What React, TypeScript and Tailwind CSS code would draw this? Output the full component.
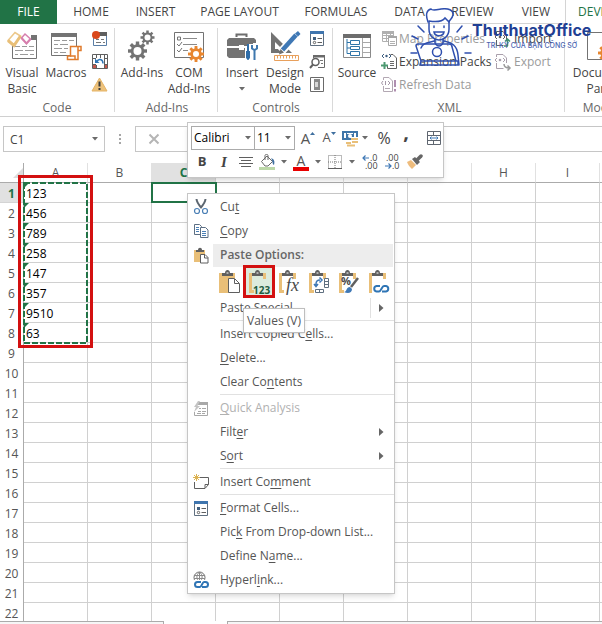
import type { ReactNode } from "react";

const tabs = ["HOME", "INSERT", "PAGE LAYOUT", "FORMULAS", "DATA", "REVIEW", "VIEW"];
const tabWidths = ["w-[64px]", "w-[65px]", "w-[103px]", "w-[90px]", "w-[57px]", "w-[69px]", "w-[58px]"];

const columns = ["A", "B", "C", "D", "E", "F", "G", "H", "I", "J"];
const rowNumbers = Array.from({ length: 22 }, (_, i) => i + 1);
const values = ["123", "456", "789", "258", "147", "357", "9510", "63"];

/* ---------- Icons ---------- */

function Icon({ w, h, children }: { w: number; h: number; children: ReactNode }) {
  return (
    <svg width={w} height={h} viewBox={`0 0 ${w} ${h}`} fill="none" className="shrink-0" aria-hidden="true">
      {children}
    </svg>
  );
}

function Caret({ className = "" }: { className?: string }) {
  return (
    <svg width="6" height="4" viewBox="0 0 6 4" className={`shrink-0 ${className}`} aria-hidden="true">
      <path d="M0 0h6L3 3.5z" fill="#6b6b6b" />
    </svg>
  );
}

function VisualBasicIcon() {
  return (
    <Icon w={32} h={30}>
      <path d="M6.500 12v15.500h24V6" stroke="#737373" />
      <path d="M25 4h6v5h-6z" fill="#737373" />
      <path d="M9 15.500h5m2 0h5m2 0h5M9 19.500h8m2 0h9M9 23.500h3m2 0h8m2 0h4" stroke="#9a9a9a" />
      <path d="M2 9.500 9 1.500 14.500 5 8 14.500z" fill="#fff" stroke="#ecc88a" strokeWidth="1.500" />
      <path d="M2 9.500l6 5 6.500-9.500" stroke="#e8bf78" strokeWidth="3" />
      <path d="M15.500 7 19 3l5.500 5-4 4.500z" fill="#fff" stroke="#d77fae" strokeWidth="1.500" />
      <path d="m15.500 7 5 5.500 4-4.500" stroke="#d77fae" strokeWidth="2" />
    </Icon>
  );
}

function MacrosIcon() {
  return (
    <Icon w={32} h={30}>
      <path d="M1.500 2.500h25v22h-25z" fill="#fff" stroke="#737373" />
      <path d="M1 2h26v4H1z" fill="#737373" />
      <path d="M4 9.500h6m2 0h5m2 0h5M4 13.500h4m2 0h8M4 17.500h8m2 0h4M4 21.500h4m2 0h6" stroke="#9a9a9a" />
      <path d="M20.500 15.500h10.500v4h-3v9H17.500v-3.500h3z" fill="#fff" stroke="#e07b2c" strokeWidth="1.500" />
      <path d="M28 19v-3.500M20 25h5v3.500" stroke="#e07b2c" strokeWidth="1.500" />
    </Icon>
  );
}

function RecordIcon() {
  return (
    <Icon w={17} h={17}>
      <path d="M2.500 8v7.500h13V4" stroke="#5a7ea6" />
      <path d="M8 2h8v4H8z" fill="#5f5f5f" />
      <path d="M5 9.500h3m2 0h3M5 12.500h5m2 0h2" stroke="#777" />
      <circle cx="5" cy="5" r="4" fill="#d9481c" />
    </Icon>
  );
}

function RelativeIcon() {
  return (
    <Icon w={17} h={17}>
      <path d="M1.500 1.500h15v14h-15zM1 5.500h16M5.500 1v15M9.500 1v4M13.500 1v15M1 11.500h16" stroke="#5f5f5f" />
      <path d="M5 5h8v7H5z" fill="#fff" />
      <path d="M6 8.500c1-3 6-3 6 2" stroke="#2f75b5" strokeWidth="1.500" />
      <path d="M4 5.500v4.500h4.500z" fill="#2f75b5" />
      <path d="M2 12h3v3H2zM14 12h2v3h-2z" fill="#c4574c" />
    </Icon>
  );
}

function WarningIcon() {
  return (
    <Icon w={17} h={15}>
      <path d="M8.500 1 16 14H1z" fill="#edc27c" stroke="#e5b466" strokeLinejoin="round" />
      <path d="M8.500 4.500v5M8.500 11v2" stroke="#3c3c3c" strokeWidth="2" />
    </Icon>
  );
}

function Gear({ cx, cy, r, color, hole }: { cx: number; cy: number; r: number; color: string; hole: number }) {
  return (
    <g transform={`translate(${cx} ${cy})`}>
      {[0, 45, 90, 135].map((a) => (
        <rect key={a} x={-r * 0.18} y={-r} width={r * 0.36} height={r * 2} fill={color} transform={`rotate(${a})`} />
      ))}
      <circle r={r * 0.72} fill={color} />
      <circle r={hole} fill="#fff" />
    </g>
  );
}

function AddInsIcon() {
  return (
    <Icon w={28} h={32}>
      <Gear cx={9.5} cy={21} r={9.5} color="#737373" hole={4} />
      <Gear cx={19.5} cy={7.5} r={7} color="#737373" hole={3} />
    </Icon>
  );
}

function ComAddInsIcon() {
  return (
    <Icon w={32} h={32}>
      <path d="M1.500 2.500h29v25h-29z" stroke="#737373" />
      <path d="M10 8.500h14M10 14.500h14M10 20.500h5" stroke="#8a8a8a" />
      <path d="M4.500 7h3v3h-3zM4 14l2 2 3-4M4 20l2 2 3-4" stroke="#737373" />
      <Gear cx={23} cy={24} r={8} color="#e8862f" hole={3} />
    </Icon>
  );
}

function ToolboxIcon() {
  return (
    <Icon w={32} h={32}>
      <path d="M10.500 7V4.500h10V7" stroke="#6d6d6d" strokeWidth="2" />
      <path d="M3 8h25l2 2v6H1v-6zM1 18h29v10H3l-2-2z" fill="#737373" />
      <path d="M13 15h5v5h-5z" fill="#fff" />
      <path d="M19 18h3v-4h5v-1h5v19H19z" fill="#fff" />
      <path d="M22 14v7M22 21v8.500" stroke="#2f6da8" strokeWidth="2" />
      <path d="M20 21h4v7l-2 2-2-2z" fill="#2f6da8" />
      <path d="M26 15v3.500l2.500 1.500 2.500-1.500V15M28.500 20v10" stroke="#3f78ae" strokeWidth="2" />
    </Icon>
  );
}

function DesignIcon() {
  return (
    <Icon w={32} h={32}>
      <path d="M2 2v21h21z" fill="#737373" />
      <path d="M6 12v7h7z" fill="#fff" />
      <path d="M12 22 28 4" stroke="#fff" strokeWidth="8" />
      <path d="M13.500 20 27 5" stroke="#3f78b5" strokeWidth="4.500" />
      <path d="M26 3.500 29 1l2.500 3-2.500 2.500z" fill="#3f78b5" />
      <path d="m11.500 19 3.500 3.500-5 2z" fill="#6d6d6d" />
      <path d="M5.500 25.500h24v5h-24z" fill="#fff" stroke="#e8a05c" />
      <path d="M8.500 26v2.500m3-2.500v2.500m3-2.500v2.500m3-2.500v2.500m3-2.500v2.500m3-2.500v2.500m3-2.500v2.500" stroke="#e8a05c" />
    </Icon>
  );
}

function PropertiesIcon() {
  return (
    <Icon w={16} h={17}>
      <path d="M1.500 1.500h13v14h-13z" fill="#fff" stroke="#5f6f80" />
      <path d="M1 1h14v3H1z" fill="#3f75ae" />
      <path d="M4 7h3v3H4z" fill="#3f5f80" />
      <path d="M8.500 8.500H13M8.500 12.500H13" stroke="#5f5f5f" />
      <circle cx="5.500" cy="12.500" r="1.200" stroke="#5f5f5f" />
    </Icon>
  );
}

function ViewCodeIcon() {
  return (
    <Icon w={17} h={17}>
      <path d="M4.500 5V2.500h11v12H9" stroke="#6a6a6a" />
      <path d="M4 2h12v2.500H4z" fill="#6a6a6a" />
      <path d="M11 7.500h3M12 10.500h2" stroke="#777" />
      <circle cx="6.500" cy="9" r="3.500" fill="#fff" stroke="#5f5f5f" strokeWidth="1.500" />
      <path d="m4 11.500-3 3.500" stroke="#5f5f5f" strokeWidth="2" />
    </Icon>
  );
}

function RunDialogIcon() {
  return (
    <Icon w={16} h={17}>
      <path d="M1.500 1.500h13v14h-13z" fill="#fff" stroke="#6a6a6a" />
      <path d="M5 3h6v11H5z" fill="#8a8a8a" />
      <path d="M6 6h3v5H6z" fill="#d8d8d8" />
    </Icon>
  );
}

function SourceIcon() {
  return (
    <Icon w={30} h={28}>
      <path d="M1.500 2.500h27v23h-27z" fill="#fff" stroke="#8a8a8a" />
      <path d="M1 2h28v4H1z" fill="#6d6d6d" />
      <path d="M20 10.500h8M20 15.500h8M20 20.500h8M20.500 6v19" stroke="#a8a8a8" />
      <path d="M5 7v14.500h4M5 10.500h4M5 16h4" stroke="#2f75a8" />
      <path d="M8.500 8.500h9v4h-9zM8.500 14.500h9v3h-9zM8.500 19.500h9v4h-9z" fill="#fff" stroke="#2f75a8" />
    </Icon>
  );
}

function MapIcon() {
  return (
    <Icon w={16} h={17}>
      <path d="M1.500 1.500h11v10h-11zM1 5.500h12M5.500 2v9M9.500 2v9M1 8.500h8" stroke="#b0b0b0" />
      <path d="M1 1h12v3H1z" fill="#b0b0b0" />
      <path d="M7.500 6.500h8v9h-8z" fill="#fff" stroke="#a6a6a6" />
      <path d="M7 6h9v2H7z" fill="#a6a6a6" />
      <path d="M9 11.500h5M9 13.500h5" stroke="#b0b0b0" />
    </Icon>
  );
}

function ExpansionIcon() {
  return (
    <Icon w={16} h={17}>
      <path d="M9.500 1.500H12l3.500 3.500v10.500h-9V12" stroke="#5f5f5f" />
      <path d="M9 8.500h4M9 10.500h4M9 12.500h4" stroke="#6a6a6a" />
      <path d="M3 1 1 3l2 2M8 1l2 2-2 2" stroke="#3c5d80" />
      <circle cx="5.500" cy="3" r="1.200" fill="#3c5d80" />
      <path d="M3.500 9v7M0 12.500h7" stroke="#4d9a72" strokeWidth="2" />
    </Icon>
  );
}

function RefreshIcon() {
  return (
    <Icon w={16} h={17}>
      <path d="M2.500 10v5.500h9V5L8 1.500H2.500V4" stroke="#b3a8b3" />
      <path d="M2 5 0.500 7 2 9M7 5l2 2-2 2M4.500 5v4" stroke="#a598a8" />
      <path d="M4 12.500h5" stroke="#b3a8b3" />
      <path d="M14 4v7M14 13v2.500" stroke="#b08fb0" strokeWidth="2" />
    </Icon>
  );
}

function ImportIcon({ muted = false }: { muted?: boolean }) {
  const c = muted ? "#a99fab" : "#5f5f5f";
  return (
    <Icon w={18} h={18}>
      <path d="M2.500 10v5.500h7M12.500 10V5L9 1.500H2.500V4" stroke={c} />
      <path d="M3 5 1 7l2 2M9 5l2 2-2 2" stroke={c} />
      <circle cx="6" cy="7" r="1.300" fill={c} />
      {muted ? (
        <path d="M10 11c0 3 2 4 5.500 4M13.500 12.500l2.500 2.500-2.500 2.500" stroke="#9a9a9a" strokeWidth="1.500" />
      ) : (
        <path d="M13.500 16V9M11 11.500 13.500 9l2.500 2.500M10 16h4" stroke="#3f8f6c" strokeWidth="1.500" />
      )}
    </Icon>
  );
}

function DocumentPanelIcon() {
  return (
    <Icon w={32} h={32}>
      <path d="M1.500 2.500h29v27h-29z" fill="#fff" stroke="#737373" />
      <Gear cx={20} cy={23} r={8} color="#e8862f" hole={3} />
    </Icon>
  );
}

function ScissorsIcon() {
  return (
    <Icon w={16} h={16}>
      <path d="M3.500 0c.2 3 1.500 5 5 9M12.500 0c-.2 3-1.500 5-5 9" stroke="#5c6670" strokeWidth="2" />
      <circle cx="4" cy="12" r="2.500" stroke="#4a7fb5" strokeWidth="1.200" />
      <circle cx="12" cy="12" r="2.500" stroke="#4a7fb5" strokeWidth="1.200" />
    </Icon>
  );
}

function CopyIcon() {
  return (
    <Icon w={16} h={16}>
      <path d="M1.500 1.500h5l2 2v8h-7z" fill="#fff" stroke="#5c6f84" />
      <path d="M3 4.500h3M3 6.500h3M3 8.500h3" stroke="#4a7fb5" />
      <path d="M7.500 4.500h5l2.500 2.500v7.500h-7.500z" fill="#fff" stroke="#5c6f84" />
      <path d="M9 8.500h4M9 10.500h4M9 12.500h4" stroke="#4a7fb5" />
    </Icon>
  );
}

function PasteIcon() {
  return (
    <Icon w={16} h={17}>
      <path d="M1 3h11v12H1z" fill="#e9bf78" />
      <path d="M3 5V3h2c0-3 4-3 4 0h2v2z" fill="#5f5f5f" />
      <path d="M7.500 7.500h4.500l3 3v5.500H7.500z" fill="#fff" stroke="#5f5f5f" />
      <path d="M11.500 8v3H15" stroke="#5f5f5f" />
    </Icon>
  );
}

function QuickIcon() {
  return (
    <Icon w={16} h={17}>
      <path d="M5 2h10v3H5z" fill="#a8a8a8" />
      <path d="M14.500 4v11.500h-13V12M6 8.500h2m1 0h4M5 11.500h3m1 0h4M4 13.500h4m1 0h3" stroke="#a8a8a8" />
      <path d="M5 1 1 7h2l-2 5 6-6H4.500L7 1z" fill="#c4c4c4" />
    </Icon>
  );
}

function CommentIcon() {
  return (
    <Icon w={17} h={16}>
      <path d="M7 3.500h8.500v7L12 14.500H1.500V8" stroke="#5f5f5f" />
      <path d="M12 14v-3.500h3.500" stroke="#5f5f5f" />
      <path d="M3.500 0v7M0 3.500h7M1 1l5 5M6 1 1 6" stroke="#dcb251" />
    </Icon>
  );
}

function HyperlinkIcon() {
  return (
    <Icon w={17} h={18}>
      <circle cx="6.500" cy="6.500" r="5.500" fill="#fff" stroke="#6a6a6a" />
      <path d="M1 4.500h11M1 7.500h11M6.500 1v9M6.500 1c-3.500 3-3.500 7 0 10M6.500 1c3.500 3 3.500 7 0 10" stroke="#8a8a8a" />
      <path d="M0 9h17v9H0z" fill="#fff" />
      <path d="M8 11H4.500a2.500 2.500 0 0 0 0 5H7c1.500 0 2.500-5 4-5h1.500a2.500 2.500 0 0 1 0 5H9" stroke="#2f75b5" strokeWidth="2" />
    </Icon>
  );
}

function Clipboard({ children, filled = false }: { children: ReactNode; filled?: boolean }) {
  return (
    <Icon w={24} h={26}>
      {filled ? <path d="M2 4h16v20H2z" fill="#e9bf78" /> : <path d="M6 5.500H3.500v17H7M14 5.500h3.500V10" stroke="#e9bf78" strokeWidth="3" />}
      <path d="M5 7V4h3c0-4 5-4 5 0h3v3z" fill="#5f5f5f" />
      <path d="M9.500 3.500h2v1h-2z" fill="#fff" />
      {children}
    </Icon>
  );
}

const pasteOptions = [
  {
    name: "Paste",
    icon: (
      <Clipboard filled>
        <path d="M11.500 9.500h6l5 5v9h-11z" fill="#fff" stroke="#5f5f5f" />
        <path d="M17.500 10v4.500H22" stroke="#5f5f5f" />
      </Clipboard>
    ),
  },
  {
    name: "Values",
    icon: (
      <Clipboard>
        <text x="6" y="25" fontSize="10" fontWeight="700" fontFamily="Open Sans, sans-serif" fill="#1f5c3f">123</text>
      </Clipboard>
    ),
  },
  {
    name: "Formulas",
    icon: (
      <Clipboard>
        <text x="9" y="22" fontSize="18" fontStyle="italic" fontFamily="Liberation Serif, serif" fill="#4a4a4a">fx</text>
      </Clipboard>
    ),
  },
  {
    name: "Transpose",
    icon: (
      <Clipboard>
        <path d="M17.500 9.500h4v9h-4zM17 12.500h5M17 15.500h5M8.500 20.500h8v3h-8zM12.500 20v4" fill="#fff" stroke="#5f6f80" />
        <path d="M9 17v-2c0-3 1-4 4-4M7 15l2 2.500 2-2.500M12.500 8.500 15 11l-2.500 2.500" stroke="#3f78b5" strokeWidth="1.500" />
      </Clipboard>
    ),
  },
  {
    name: "Formatting",
    icon: (
      <Clipboard>
        <text x="4" y="16" fontSize="11" fontWeight="700" fontFamily="Open Sans, sans-serif" fill="#4a4a4a">%</text>
        <path d="m14 18 7-9" stroke="#5f5f5f" strokeWidth="2.500" />
        <path d="M7 23c3 0 2-5 6-5l2 2c0 4-4 5-8 3z" fill="#3f78b5" />
      </Clipboard>
    ),
  },
  {
    name: "Paste Link",
    icon: (
      <Clipboard>
        <path d="M5 15h18v9H5z" fill="#fff" />
        <path d="M13 17H9.500a2.800 2.800 0 0 0 0 5.500H12c2 0 3-5.500 5-5.500h2a2.800 2.800 0 0 1 0 5.500h-4" stroke="#2f75b5" strokeWidth="2" />
      </Clipboard>
    ),
  },
];

/* ---------- Ribbon ---------- */

function Group({ label, className = "", children }: { label: string; className?: string; children: ReactNode }) {
  return (
    <section className={`flex shrink-0 flex-col ${className}`}>
      <div className="flex h-[76px] pt-[3px]">{children}</div>
      <h2 className="h-4 text-center leading-4 text-[#666]">{label}</h2>
    </section>
  );
}

function Divider() {
  return <div className="mt-1 h-[84px] w-px shrink-0 bg-[#d9d9d9]" />;
}

function BigButton({ icon, lines, caret, className = "" }: { icon: ReactNode; lines: string[]; caret?: boolean; className?: string }) {
  return (
    <button type="button" className={`flex shrink-0 flex-col items-center ${className}`}>
      <span className="flex h-[38px] items-center">{icon}</span>
      {lines.map((l) => (
        <span key={l} className="leading-4 whitespace-nowrap">{l}</span>
      ))}
      {caret && <Caret className="mt-1.5" />}
    </button>
  );
}

function IconStack({ items }: { items: { name: string; icon: ReactNode }[] }) {
  return (
    <div className="flex w-[22px] flex-col">
      {items.map((it) => (
        <button key={it.name} type="button" aria-label={it.name} className="flex h-[23px] items-center justify-center">
          {it.icon}
        </button>
      ))}
    </div>
  );
}

function RowButton({ icon, label, muted }: { icon: ReactNode; label: string; muted?: boolean }) {
  return (
    <button type="button" disabled={muted} className={`flex h-[23px] items-center gap-0.5 whitespace-nowrap ${muted ? "text-[#9b9b9b]" : ""}`}>
      {icon}
      {label}
    </button>
  );
}

function Ribbon() {
  return (
    <header>
      <nav className="flex h-6">
        <button type="button" className="w-[57px] shrink-0 bg-[#217346] text-white">FILE</button>
        <div className="flex shrink-0 border-b border-[#d4d4d4] pl-0.5">
          {tabs.map((t, i) => (
            <button key={t} type="button" className={`shrink-0 whitespace-nowrap ${tabWidths[i]}`}>{t}</button>
          ))}
        </div>
        <button type="button" className="flex-1 border-l border-[#d4d4d4] pl-3 text-left text-[#217346]">DEVELOPER</button>
      </nav>
      <div className="flex h-[93px] overflow-hidden border-b border-[#d0d0d0]">
        <Group label="Code" className="w-[114px]">
          <BigButton className="w-[44px]" icon={<VisualBasicIcon />} lines={["Visual", "Basic"]} />
          <BigButton className="w-[44px]" icon={<MacrosIcon />} lines={["Macros"]} />
          <IconStack
            items={[
              { name: "Record Macro", icon: <RecordIcon /> },
              { name: "Use Relative References", icon: <RelativeIcon /> },
              { name: "Macro Security", icon: <WarningIcon /> },
            ]}
          />
        </Group>
        <Divider />
        <Group label="Add-Ins" className="w-[102px] pl-0.5">
          <BigButton className="w-[50px]" icon={<AddInsIcon />} lines={["Add-Ins"]} />
          <BigButton className="w-[44px]" icon={<ComAddInsIcon />} lines={["COM", "Add-Ins"]} />
        </Group>
        <Divider />
        <Group label="Controls" className="w-[114px] pl-0.5">
          <BigButton className="w-[44px]" icon={<ToolboxIcon />} lines={["Insert"]} caret />
          <BigButton className="w-[42px]" icon={<DesignIcon />} lines={["Design", "Mode"]} />
          <IconStack
            items={[
              { name: "Properties", icon: <PropertiesIcon /> },
              { name: "View Code", icon: <ViewCodeIcon /> },
              { name: "Run Dialog", icon: <RunDialogIcon /> },
            ]}
          />
        </Group>
        <Divider />
        <Group label="XML" className="w-[231px] pl-0.5">
          <BigButton className="w-[44px]" icon={<SourceIcon />} lines={["Source"]} />
          <div className="flex w-[115px] flex-col pl-0.5">
            <RowButton icon={<MapIcon />} label="Map Properties" muted />
            <RowButton icon={<ExpansionIcon />} label="Expansion Packs" />
            <RowButton icon={<RefreshIcon />} label="Refresh Data" muted />
          </div>
          <div className="flex flex-col">
            <RowButton icon={<ImportIcon />} label="Import" />
            <RowButton icon={<ImportIcon muted />} label="Export" muted />
          </div>
        </Group>
        <Divider />
        <Group label="Modify" className="w-[74px]">
          <BigButton className="w-full" icon={<DocumentPanelIcon />} lines={["Document", "Panel"]} />
        </Group>
      </div>
    </header>
  );
}

function Watermark() {
  return (
    <div className="pointer-events-none absolute top-2 left-[410px] flex text-[#1f3f94]">
      <svg width="62" height="58" viewBox="0 0 62 58" fill="none" stroke="#2f4fae" strokeWidth="1.500" strokeLinecap="round" aria-hidden="true">
        <path d="M18 14C15 6 17 2 21 1c1 2 5 1 10 0 7-1 13 1 12 6-1 4-3 4-4 7" />
        <path d="M19 13v8c0 7 5 11 10 11s10-4 10-11v-8M19 13c6 1 13 1 16-3l4 4" />
        <path d="M24 18v1.500M34 18v1.500M24 24h10c-1 5-9 5-10 0z" />
        <path d="M25 31v4c2 4 6 4 8 0v-4M24 33c-7 2-11 2-13 7M34 33c8 2 13 4 14 14l1 10" />
        <path d="M6 38c0-2 1-2 2-2h31c2 0 3 1 3 3l4 14H11zM11 53l-1 4h38v-4H17" />
        <circle cx="27" cy="44" r="4.500" />
        <path d="m8 18 6 6M2 28l6 3M1 45h6M52 18l-5 6M58 28l-6 3M55 45h6" />
      </svg>
      <div className="flex flex-col pt-3">
        <span className="font-[Inter,sans-serif] text-[16px] leading-5 font-bold">ThuthuatOffice</span>
        <span className="pt-0.5 text-center font-[Inter,sans-serif] text-[7px] leading-2 font-medium text-[#4a63b0]">TRI KỶ CỦA BẠN CÔNG SỞ</span>
      </div>
    </div>
  );
}

/* ---------- Formula bar and sheet ---------- */

function FormulaBar() {
  return (
    <div className="flex h-[46px] items-center pt-px pb-1 pl-[3px]">
      <div className="flex h-[26px] w-[102px] shrink-0 items-center border border-[#c6c6c6] pr-1.5">
        <input aria-label="Name Box" defaultValue="C1" className="w-full min-w-0 bg-transparent pt-0.5 pl-1.5 outline-none" />
        <Caret />
      </div>
      <div className="flex w-[30px] shrink-0 flex-col items-center gap-0.5">
        <span className="size-0.5 bg-[#a6a6a6]" />
        <span className="size-0.5 bg-[#a6a6a6]" />
        <span className="size-0.5 bg-[#a6a6a6]" />
      </div>
      <div className="flex h-[26px] flex-1 items-center border border-r-0 border-[#c6c6c6] pl-3">
        <button type="button" aria-label="Cancel">
          <Icon w={12} h={12}>
            <path d="m1.500 1.500 9 9M10.500 1.500l-9 9" stroke="#b5b5b5" strokeWidth="2" />
          </Icon>
        </button>
        <input aria-label="Formula" className="min-w-0 flex-1 bg-transparent outline-none" />
      </div>
    </div>
  );
}

function Sheet() {
  return (
    <main className="relative overflow-hidden">
      <table className="w-[664px] table-fixed border-separate border-spacing-0">
        <thead>
          <tr className="h-5 text-[#555]">
            <th className="h-5 w-6 border-r border-b border-[#ababab] p-0">
              <svg width="10" height="10" viewBox="0 0 10 10" className="ml-auto" aria-hidden="true">
                <path d="M10 0v10H0z" fill="#dcdcdc" />
              </svg>
            </th>
            {columns.map((c) => (
              <th
                key={c}
                scope="col"
                className={
                  c === "C"
                    ? "h-5 border-r border-b border-r-[#d4d4d4] border-b-[#217346] bg-[#e1e1e1] p-0 leading-4 font-bold text-[#217346]"
                    : "h-5 border-r border-b border-r-[#e1e1e1] border-b-[#ababab] p-0 leading-4 font-normal"
                }
              >
                {c}
              </th>
            ))}
          </tr>
        </thead>
        <tbody>
          {rowNumbers.map((r) => (
            <tr key={r}>
              <th
                scope="row"
                className={
                  r === 1
                    ? "h-5 border-r border-b border-r-[#217346] border-b-[#d4d4d4] bg-[#e1e1e1] p-0 pt-0.5 leading-4 font-bold text-[#217346]"
                    : "h-5 border-r border-r-[#ababab] p-0 pt-0.5 leading-4 font-normal text-[#555]"
                }
              >
                {r}
              </th>
              {columns.map((c) => (
                <td key={c} className="relative h-5 border-r border-b border-[#d0d0d0] p-0 pt-0.5 leading-4">
                  {c === "A" && values[r - 1] && (
                    <>
                      <svg width="5" height="5" viewBox="0 0 5 5" className="absolute top-0 left-0" aria-hidden="true">
                        <path d="M0 0h5L0 5z" fill="#217346" />
                      </svg>
                      <span className="pl-0.5 text-black">{values[r - 1]}</span>
                    </>
                  )}
                  {c === "C" && r === 1 && <div className="absolute -top-px -right-0.5 -bottom-px -left-px border-2 border-[#217346]" />}
                </td>
              ))}
            </tr>
          ))}
        </tbody>
      </table>

      {/* copy marquee */}
      <svg width="65" height="162" viewBox="0 0 65 162" fill="none" className="absolute top-[19px] left-[23px]" aria-hidden="true">
        <path d="M1 1h63v160H1z" stroke="#217346" strokeWidth="2" strokeDasharray="6 2" />
      </svg>
      <div className="absolute top-3 left-[18px] h-[173px] w-[75px] border-[3px] border-[#d31010]" />
    </main>
  );
}

function SheetTabs() {
  return (
    <footer className="-mt-0.5 flex h-1 justify-between">
      <div className="relative w-[164px] border-t border-r border-[#ababab] bg-[#f6f6f6]" />
      <div className="relative w-[63px] bg-white" />
      <div className="relative flex-1 border-t border-l border-[#ababab] bg-[#f6f6f6]" />
    </footer>
  );
}

/* ---------- Floating toolbar ---------- */

function Tool({ name, className, children }: { name: string; className: string; children: ReactNode }) {
  return (
    <button type="button" aria-label={name} className={`flex h-6 shrink-0 items-center justify-center ${className}`}>
      {children}
    </button>
  );
}

function MiniToolbar() {
  return (
    <div className="absolute top-[122px] left-[187px] flex w-[257px] flex-col border border-[#c6c6c6] bg-white py-[3px] pl-[3px] shadow-md">
      <div className="flex items-center">
        <div className="relative h-6 w-[64px] shrink-0">
          <select aria-label="Font" className="size-full appearance-none border border-[#ababab] pl-0.5 text-black">
            <option>Calibri</option>
          </select>
          <Caret className="absolute top-2.5 right-1" />
        </div>
        <div className="relative -ml-px h-6 w-[41px] shrink-0">
          <select aria-label="Font size" className="size-full appearance-none border border-[#ababab] pl-0.5 text-black">
            <option>11</option>
          </select>
          <Caret className="absolute top-2.5 right-1" />
        </div>
        <Tool name="Increase Font Size" className="w-6 pl-0.5">
          <span className="text-[15px] text-[#555]">A</span>
          <Icon w={5} h={12}><path d="M0 3h5L2.500 0z" fill="#3f6f9f" /></Icon>
        </Tool>
        <Tool name="Decrease Font Size" className="w-5">
          <span className="text-[13px] text-[#555]">A</span>
          <Icon w={5} h={12}><path d="M0 0h5L2.500 3z" fill="#3f6f9f" /></Icon>
        </Tool>
        <Tool name="Accounting Number Format" className="w-[22px]">
          <Icon w={18} h={17}>
            <path d="M1 1h16v9H1z" fill="#3f75a8" />
            <path d="M3 3h2v5H3zM13 3h2v4h-2zM6 3h6v1H6z" fill="#fff" />
            <circle cx="9" cy="6" r="2" fill="#fff" />
            <path d="M10 8h7v2.500h-7zM11 11h6v2h-6zM5 12h5v2H5zM6 14.500h8v2H6z" fill="#e9bf78" />
            <path d="M9 7.500h9M10 10.500h7" stroke="#fff" />
          </Icon>
        </Tool>
        <Caret className="mx-px" />
        <Tool name="Percent Style" className="ml-px w-7 text-[16px]">%</Tool>
        <Tool name="Comma Style" className="w-4 pb-3 text-[20px] font-bold">,</Tool>
        <Tool name="Merge" className="ml-2 w-6">
          <Icon w={16} h={16}>
            <path d="M1.500 1.500h13v13h-13zM1 5.500h14M1 10.500h14M7.500 1v4M7.500 11v4" stroke="#5f6670" />
            <path d="M4 8h8M5.500 6.500 4 8l1.500 1.500M10.500 6.500 12 8l-1.500 1.500" stroke="#3f78b5" />
          </Icon>
        </Tool>
      </div>
      <div className="flex items-center">
        <Tool name="Bold" className="w-[22px] text-[13px] font-bold">B</Tool>
        <Tool name="Italic" className="w-[22px] font-[Liberation_Serif,serif] text-[15px] font-bold italic">I</Tool>
        <Tool name="Center" className="w-[22px]">
          <Icon w={14} h={12}>
            <path d="M0 1.500h14M2 4.500h10M0 7.500h14M2 10.500h10" stroke="#5f5f5f" />
          </Icon>
        </Tool>
        <Tool name="Fill Color" className="w-5">
          <Icon w={17} h={17}>
            <path d="M0 13h16v3H0z" fill="#bcd8a8" />
            <path d="M2.500 7.500 8 2l5.500 5.500L9 12H6z" fill="#fff" stroke="#6a6a6a" />
            <path d="M6 6V1.500c0-1.500 3-1.500 3 0V6" stroke="#6a6a6a" />
            <path d="M12 4c3 1 4 3 3 7-2-1-1-4-3-7z" fill="#3f6f9f" />
          </Icon>
        </Tool>
        <Caret className="mx-1" />
        <Tool name="Font Color" className="w-5">
          <span className="border-b-4 border-[#e80000] px-1 text-[14px] leading-[13px] text-[#555]">A</span>
        </Tool>
        <Caret className="mx-1" />
        <Tool name="Borders" className="w-5">
          <Icon w={14} h={14}>
            <path d="M.5.500h13v13H.5zM7 0v14M0 7h14" stroke="#777" strokeDasharray="1 1" />
            <path d="M0 13.500h14" stroke="#5f5f5f" />
          </Icon>
        </Tool>
        <Caret className="mx-1" />
        <Tool name="Increase Decimal" className="w-[22px]">
          <Icon w={16} h={16}>
            <path d="M1 4h6M3.500 1.500 1 4l2.500 2.500" stroke="#3f78b5" strokeWidth="1.200" />
            <text x="8" y="7" fontSize="9" fill="#444">.0</text>
            <text x="3" y="15" fontSize="9" fill="#444">.00</text>
          </Icon>
        </Tool>
        <Tool name="Decrease Decimal" className="w-[22px]">
          <Icon w={16} h={16}>
            <text x="2" y="7" fontSize="9" fill="#444">.00</text>
            <path d="M1 12h6M4.500 9.500 7 12l-2.500 2.500" stroke="#3f78b5" strokeWidth="1.200" />
            <text x="8" y="15" fontSize="9" fill="#444">.0</text>
          </Icon>
        </Tool>
        <Tool name="Format Painter" className="w-6">
          <Icon w={16} h={16}>
            <path d="m0 8 4-2 5 5-4 4c-2-2-4-4-5-7z" fill="#eebc7d" />
            <path d="m5 5 3-2 5 5-3 3z" fill="#666" />
            <path d="m10 6 4-4" stroke="#666" strokeWidth="3.500" strokeLinecap="round" />
          </Icon>
        </Tool>
      </div>
    </div>
  );
}

/* ---------- Context menu ---------- */

type ItemProps = { pre?: string; k?: string; post?: string; icon?: ReactNode; arrow?: boolean; split?: boolean; disabled?: boolean };

function Item({ pre = "", k = "", post = "", icon, arrow, split, disabled }: ItemProps) {
  return (
    <button
      type="button"
      role="menuitem"
      disabled={disabled}
      className={`flex h-6 w-full items-center text-left whitespace-nowrap ${disabled ? "text-[#b1b1b1]" : ""}`}
    >
      <span className="flex w-8 shrink-0 pl-[5px]">{icon}</span>
      <span className="flex-1">
        {pre}
        <span className="underline underline-offset-2">{k}</span>
        {post}
      </span>
      {split && <span className="mr-2 h-5 w-px bg-[#e1e1e1]" />}
      {arrow && (
        <svg width="5" height="8" viewBox="0 0 5 8" className="mr-2.5 shrink-0" aria-hidden="true">
          <path d="M0 0v8l4.500-4z" fill="#666" />
        </svg>
      )}
    </button>
  );
}

function Separator() {
  return (
    <div className="h-0.5 pl-8">
      <div className="h-px bg-[#e1e1e1]" />
    </div>
  );
}

function ContextMenu() {
  return (
    <div role="menu" className="absolute top-[193px] left-[187px] w-[208px] border border-[#c6c6c6] bg-white py-px text-[#555] shadow-md">
      <Item pre="Cu" k="t" icon={<ScissorsIcon />} />
      <Item k="C" post="opy" icon={<CopyIcon />} />
      <div className="flex h-6 items-center">
        <span className="w-[25px] shrink-0 pl-[5px]"><PasteIcon /></span>
        <span className="mr-px flex h-[23px] flex-1 items-center bg-[#ededed] pl-[7px] font-semibold text-[#666]">Paste Options:</span>
      </div>
      <div className="flex h-[29px] items-center pl-[26px]">
        {pasteOptions.map((p) =>
          p.name === "Values" ? (
            <button
              key={p.name}
              type="button"
              aria-label={p.name}
              className="z-10 -mx-px flex h-[33px] w-8 shrink-0 items-center justify-center border-[3px] border-[#d31010] bg-[#dcebdd]"
            >
              {p.icon}
            </button>
          ) : (
            <button key={p.name} type="button" aria-label={p.name} className="flex w-[30px] shrink-0 justify-center">
              {p.icon}
            </button>
          )
        )}
      </div>
      <Item pre="Paste " k="S" post="pecial..." arrow split />
      <Separator />
      <Item pre="Insert Copied C" k="e" post="lls..." />
      <Item k="D" post="elete..." />
      <Item pre="Clear Co" k="n" post="tents" />
      <Separator />
      <Item k="Q" post="uick Analysis" icon={<QuickIcon />} disabled />
      <Item pre="Filt" k="e" post="r" arrow />
      <Item pre="S" k="o" post="rt" arrow />
      <Separator />
      <Item pre="Insert Co" k="m" post="ment" icon={<CommentIcon />} />
      <Separator />
      <Item k="F" post="ormat Cells..." icon={<PropertiesIcon />} />
      <Item pre="Pic" k="k" post=" From Drop-down List..." />
      <Item pre="Define N" k="a" post="me..." />
      <Item pre="Hyperl" k="i" post="nk..." icon={<HyperlinkIcon />} />
      <div role="tooltip" className="absolute top-[114px] left-[55px] z-20 flex h-[25px] w-[62px] items-center justify-center border border-[#bebebe] bg-white whitespace-nowrap shadow-sm">
        Values (V)
      </div>
    </div>
  );
}

export default function App() {
  return (
    <div className="relative h-screen overflow-hidden bg-white font-[Open_Sans,Noto_Sans,sans-serif] text-[12px] text-[#444]">
      <Ribbon />
      <Watermark />
      <FormulaBar />
      <Sheet />
      <SheetTabs />
      <MiniToolbar />
      <ContextMenu />
    </div>
  );
}
